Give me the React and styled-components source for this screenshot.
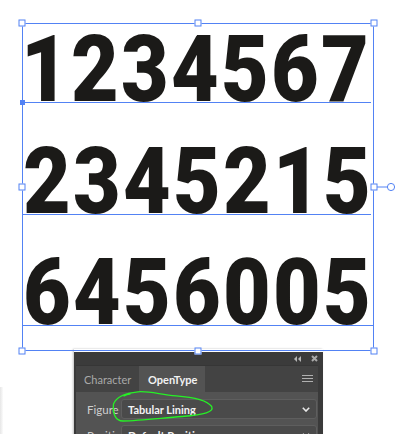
import React from 'react';
import styled, { createGlobalStyle } from 'styled-components';

const BLUE = '#5282f4';

const Global = createGlobalStyle`
  html, body { margin: 0; padding: 0; background: #ffffff; }
  body { width: 395px; height: 434px; overflow: hidden; font-family: Lato, "Noto Sans", sans-serif; }
`;

const Stage = styled.div`
  position: relative;
  width: 395px;
  height: 434px;
  overflow: hidden;
  padding-top: 23px;
  box-sizing: border-box;
`;

const TextFrame = styled.div`
  position: relative;
  z-index: 2;
  margin-left: 22px;
  width: 352px;
  height: 328px;
  box-sizing: border-box;
  border: 1px solid ${BLUE};
  display: flex;
  flex-direction: column;
`;

const Row = styled.div`
  display: flex;
  align-items: flex-end;
  height: ${p => p.$h}px;
  width: ${p => (p.$full ? '100%' : '348px')};
  border-bottom: 1px solid ${BLUE};
  box-sizing: content-box;
  position: relative;
`;

const Digits = styled.span`
  display: inline-block;
  margin-left: ${p => p.$shift}px;
  font-family: Roboto, "Liberation Sans", sans-serif;
  font-weight: 900;
  font-size: 93px;
  line-height: 0.6836;
  letter-spacing: 2.6px;
  color: #1b1a18;
  white-space: nowrap;
  transform: scaleX(0.885);
  transform-origin: left bottom;
`;

const Anchor = styled.span`
  position: absolute;
  left: -3px;
  bottom: -3px;
  width: 5px;
  height: 5px;
  background: ${BLUE};
`;

const HandleLayer = styled.div`
  position: absolute;
  inset: -1px;
  pointer-events: none;
`;

const Handle = styled.span`
  position: absolute;
  left: ${p => p.$x}%;
  top: ${p => p.$y}%;
  width: 7px;
  height: 7px;
  box-sizing: border-box;
  transform: translate(-50%, -50%);
  border: 1px solid ${BLUE};
  background: #fff;
`;

const Rotator = styled.svg`
  position: absolute;
  left: 100%;
  top: 50%;
  transform: translateY(-50%);
  overflow: visible;
`;

const EdgeShade = styled.div`
  position: absolute;
  left: 0;
  top: 387px;
  width: 3px;
  height: 47px;
  background: linear-gradient(to right, #e6e6e6, #fbfbfb);
`;

const Panel = styled.div`
  position: relative;
  z-index: 1;
  margin: -2px 0 0 74px;
  width: 249px;
  box-sizing: border-box;
  border-top: 3px solid #ffffff;
  background: #3a3a3a;
  box-shadow: -1px 0 2px rgba(0, 0, 0, 0.25);
  display: flex;
  flex-direction: column;
`;

const TitleBar = styled.div`
  height: 13px;
  display: flex;
  align-items: center;
  justify-content: flex-end;
  gap: 10px;
  padding-right: 5px;
  background: #3b3b3b;
`;

const Inner = styled.div`
  margin: 0 5px 0 2px;
  display: flex;
  flex-direction: column;
`;

const TabBar = styled.div`
  height: 26px;
  display: flex;
  align-items: stretch;
  background: #434343;
  border-top: 1px solid #363636;
`;

const Tab = styled.div`
  width: ${p => p.$w}px;
  display: flex;
  align-items: center;
  padding-left: ${p => p.$pl}px;
  box-sizing: border-box;
  font-size: 11px;
  font-weight: ${p => (p.$active ? 700 : 400)};
  color: ${p => (p.$active ? '#f2f2f2' : '#a9a9a9')};
  background: ${p => (p.$active ? '#535353' : 'transparent')};
`;

const MenuButton = styled.div`
  margin-left: auto;
  margin-right: 5px;
  display: flex;
  align-items: center;
`;

const Body = styled.div`
  background: #535353;
  padding: 7px 1px 20px 11px;
  display: flex;
  flex-direction: column;
  gap: 6px;
`;

const Field = styled.div`
  display: flex;
  align-items: center;
  height: 20px;
`;

const Label = styled.div`
  width: 34px;
  overflow: hidden;
  white-space: nowrap;
  font-size: 11.5px;
  color: #cfcfcf;
`;

const Select = styled.div`
  flex: 1;
  height: 20px;
  box-sizing: border-box;
  display: flex;
  align-items: center;
  justify-content: space-between;
  padding: 0 6px 0 6px;
  background: #4a4a4a;
  border: 1px solid #5e5e5e;
  border-radius: 3px;
  font-size: 11px;
  font-weight: 700;
  color: #f3f3f3;
  white-space: nowrap;
`;

const Circled = styled.svg`
  position: absolute;
  left: 110px;
  top: 388px;
  overflow: visible;
  z-index: 3;
`;

const Chevron = () => (
  <svg width="8" height="5" viewBox="0 0 8 5">
    <polyline points="0.8,0.8 4,4 7.2,0.8" fill="none" stroke="#e8e8e8" strokeWidth="1.6" />
  </svg>
);

const rows = [
  { text: '1234567', h: 78, shift: -2 },
  { text: '2345215', h: 111, shift: 0 },
  { text: '6456005', h: 110, shift: 0, full: true },
];

const handles = [
  [0, 0], [50, 0], [100, 0],
  [0, 50], [100, 50],
  [0, 100], [50, 100], [100, 100],
];

export default function App() {
  return (
    <>
      <Global />
      <Stage>
        <TextFrame>
          {rows.map((r, i) => (
            <Row key={r.text} $h={r.h} $full={r.full}>
              <Digits $shift={r.shift}>{r.text}</Digits>
              {i === 0 && <Anchor />}
            </Row>
          ))}
          <HandleLayer>
            {handles.map(([x, y]) => (
              <Handle key={`${x}-${y}`} $x={x} $y={y} />
            ))}
            <Rotator width="22" height="10" viewBox="0 0 22 10">
              <line x1="3" y1="5" x2="13" y2="5" stroke={BLUE} strokeWidth="1" />
              <circle cx="17" cy="5" r="3.6" fill="#fff" stroke={BLUE} strokeWidth="1" />
            </Rotator>
          </HandleLayer>
        </TextFrame>

        <Panel>
          <TitleBar>
            <svg width="7" height="6" viewBox="0 0 7 6">
              <polygon points="3,0 0,3 3,6" fill="#b5b5b5" />
              <polygon points="7,0 4,3 7,6" fill="#b5b5b5" />
            </svg>
            <svg width="7" height="7" viewBox="0 0 7 7">
              <path d="M1 1 L6 6 M6 1 L1 6" stroke="#a9a9a9" strokeWidth="2" />
            </svg>
          </TitleBar>
          <Inner>
            <TabBar>
              <Tab $w={63} $pl={8}>Character</Tab>
              <Tab $w={66} $pl={9} $active>OpenType</Tab>
              <MenuButton>
                <svg width="11" height="8" viewBox="0 0 11 8">
                  <path d="M0 0.5 H11 M0 3.5 H11 M0 6.5 H11" stroke="#b0b0b0" strokeWidth="1" />
                </svg>
              </MenuButton>
            </TabBar>
            <Body>
              <Field>
                <Label>Figure</Label>
                <Select>
                  <span>Tabular Lining</span>
                  <Chevron />
                </Select>
              </Field>
              <Field>
                <Label>Position</Label>
                <Select>
                  <span>Default Position</span>
                  <Chevron />
                </Select>
              </Field>
            </Body>
          </Inner>
        </Panel>

        <Circled width="106" height="36" viewBox="0 0 106 36">
          <path
            d="M3.5 16 C6 9 16 5 28 3.8 C40 3 50 6.5 66 7.8 C82 9 97 12 101.7 18.5 C104 24 95 26.5 72 28.5 C52 30 30 32.5 13 33 C5 33 2.5 25 3.5 16 M14 8 C17 6 19 6 20 6"
            fill="none"
            stroke="#26f026"
            strokeWidth="1.3"
            strokeLinecap="round"
          />
        </Circled>
        <EdgeShade />
      </Stage>
    </>
  );
}
